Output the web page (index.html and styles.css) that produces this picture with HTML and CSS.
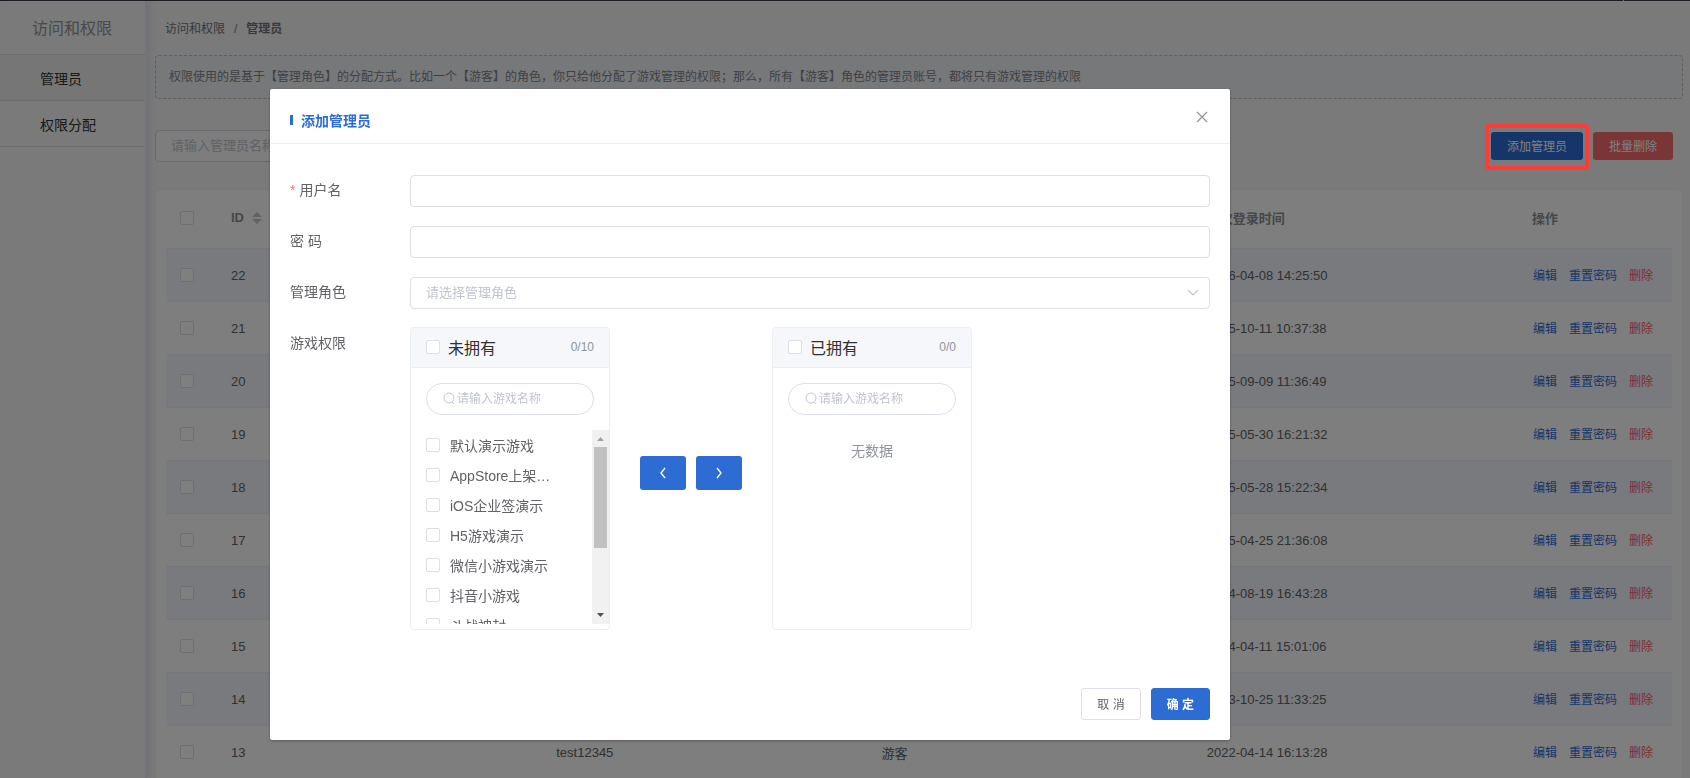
FILE: index.html
```
<!DOCTYPE html>
<html lang="zh-CN">
<head>
<meta charset="utf-8">
<title>管理员</title>
<link rel="stylesheet" href="styles.css">
</head>
<body>
<div class="topbar"></div>
<div class="layout">
  <aside class="sidebar">
    <h1 class="sidebar-title">访问和权限</h1>
    <nav class="menu">
      <a class="menu-item active" href="#">管理员</a>
      <a class="menu-item" href="#">权限分配</a>
    </nav>
  </aside>
  <main class="content">
    <nav class="breadcrumb"><a href="#">访问和权限</a><span class="sep">/</span><b>管理员</b></nav>
    <p class="notice">权限使用的是基于【管理角色】的分配方式。比如一个【游客】的角色，你只给他分配了游戏管理的权限；那么，所有【游客】角色的管理员账号，都将只有游戏管理的权限</p>
    <div class="toolbar">
      <input class="search" type="text" placeholder="请输入管理员名称" aria-label="管理员名称">
      <div class="toolbar-actions">
        <div class="marked"><button class="btn-small primary" type="button">添加管理员</button><span class="marker"></span></div>
        <button class="btn-small danger" type="button">批量删除</button>
      </div>
    </div>
    <section class="card">
      <table class="table">
        <colgroup><col class="col-check"><col><col><col><col><col class="col-ops"></colgroup>
        <thead>
          <tr><th><input class="check" type="checkbox" aria-label="全选"></th><th><span class="sortable">ID <svg class="sort" viewBox="0 0 10 14"><path d="M0 6L5 1L10 6ZM0 8L5 13L10 8Z" fill="#c0c4cc"/></svg></span></th><th></th><th></th><th>上次登录时间</th><th>操作</th></tr>
        </thead>
        <tbody id="rows"></tbody>
      </table>
    </section>
  </main>
</div>

<div class="overlay">
  <form class="dialog" role="dialog" aria-labelledby="dialog-title">
    <header class="dialog-header">
      <h2 class="dialog-title" id="dialog-title">添加管理员</h2>
      <button class="close" type="button" aria-label="关闭"><svg viewBox="0 0 12 12"><path d="M1 1L11 11M11 1L1 11" stroke="#909399" stroke-width="1.1" fill="none"/></svg></button>
    </header>
    <div class="dialog-body">
      <div class="field"><label class="label required" for="user">用户名</label><input class="control" id="user" type="text"></div>
      <div class="field"><label class="label" for="pass">密 码</label><input class="control" id="pass" type="password"></div>
      <div class="field"><label class="label" for="role">管理角色</label>
        <div class="select-wrap"><select class="control select" id="role"><option>请选择管理角色</option></select><svg class="arrow" viewBox="0 0 12 8"><path d="M1 1L6 6L11 1" stroke="#c0c4cc" stroke-width="1.2" fill="none"/></svg></div>
      </div>
      <div class="field"><span class="label">游戏权限</span>
        <div class="transfer">
          <section class="panel">
            <div class="panel-head"><label class="panel-name"><input class="check" type="checkbox">未拥有</label><span class="count">0/10</span></div>
            <div class="filter"><svg viewBox="0 0 14 14"><circle cx="7" cy="6" r="5"/><path d="M10 10L12 12"/></svg><input type="text" placeholder="请输入游戏名称" aria-label="请输入游戏名称"></div>
            <div class="scroll">
              <div class="list">
                <label class="item"><input class="check" type="checkbox"><span>默认演示游戏</span></label>
                <label class="item"><input class="check" type="checkbox"><span>AppStore上架…</span></label>
                <label class="item"><input class="check" type="checkbox"><span>iOS企业签演示</span></label>
                <label class="item"><input class="check" type="checkbox"><span>H5游戏演示</span></label>
                <label class="item"><input class="check" type="checkbox"><span>微信小游戏演示</span></label>
                <label class="item"><input class="check" type="checkbox"><span>抖音小游戏</span></label>
                <label class="item"><input class="check" type="checkbox"><span>斗战神封</span></label>
              </div>
              <div class="bar"><svg viewBox="0 0 17 17"><path d="M5 11L8.500 7L12 11Z" fill="#a3a3a3"/></svg><i class="thumb"></i><svg class="down" viewBox="0 0 17 17"><path d="M5 6L8.500 10L12 6Z" fill="#505050"/></svg></div>
            </div>
          </section>
          <div class="moves">
            <button class="move" type="button" aria-label="移到左侧"><svg viewBox="0 0 8 14"><path d="M6 2L2 7L6 12"/></svg></button>
            <button class="move" type="button" aria-label="移到右侧"><svg viewBox="0 0 8 14"><path d="M2 2L6 7L2 12"/></svg></button>
          </div>
          <section class="panel">
            <div class="panel-head"><label class="panel-name"><input class="check" type="checkbox">已拥有</label><span class="count">0/0</span></div>
            <div class="filter"><svg viewBox="0 0 14 14"><circle cx="7" cy="6" r="5"/><path d="M10 10L12 12"/></svg><input type="text" placeholder="请输入游戏名称" aria-label="请输入游戏名称"></div>
            <p class="empty">无数据</p>
          </section>
        </div>
      </div>
    </div>
    <footer class="dialog-footer">
      <button class="btn" type="button">取 消</button>
      <button class="btn confirm" type="button">确 定</button>
    </footer>
  </form>
</div>
<script src="app.js"></script>
</body>
</html>
```

FILE: styles.css
```
* { box-sizing: border-box; }

body {
  margin: 0;
  height: 100vh;
  overflow: hidden;
  display: flex;
  flex-direction: column;
  background: #f4f4f4;
  color: #606266;
  font-family: "Liberation Sans", "Noto Sans CJK SC", sans-serif;
  font-size: 14px;
}

h1, h2, p { margin: 0; font-weight: normal; }
a { color: inherit; text-decoration: none; }
button, input, select { font-family: inherit; outline: none; }
button { cursor: pointer; padding: 0; border: 0; }
svg { display: block; flex: none; }

.topbar { flex: none; display: flex; justify-content: flex-end; height: 1px; padding-right: 66px; background: #3a3444; }
.topbar::after { content: ""; width: 1px; background: #ddd; }
.layout { flex: 1; min-height: 0; display: flex; }

.sidebar {
  position: relative;
  flex: none;
  width: 147px;
  border-right: 2px solid #e4e8f2;
  box-shadow: 2px 0 8px rgba(60, 70, 130, 0.12);
  background: #f4f4f4;
}
.sidebar-title {
  height: 54px;
  padding: 2px 0 0 32px;
  border-bottom: 1px solid #dcdcdc;
  font-size: 16px;
  line-height: 52px;
  color: #909399;
}
.menu-item {
  display: block;
  height: 46px;
  padding: 1px 0 0 40px;
  border-bottom: 1px solid #dcdcdc;
  line-height: 46px;
  color: #303133;
}
.menu-item.active { background: #ececec; }

.content { flex: 1; min-width: 0; padding: 0 7px 0 8px; }
.breadcrumb {
  display: flex;
  padding: 1px 10px 0;
  height: 54px;
  line-height: 54px;
  font-size: 12px;
  color: #707278;
}
.breadcrumb .sep { padding: 0 9px; color: #808080; }

.notice {
  height: 44px;
  padding: 0 13px;
  border: 1px dashed #b8bcc4;
  border-radius: 4px;
  background: #eef0f4;
  font-size: 12px;
  line-height: 42px;
  color: #808288;
}

.toolbar {
  display: flex;
  align-items: center;
  justify-content: space-between;
  margin-top: 31px;
  padding-right: 10px;
}
.search {
  width: 200px;
  height: 32px;
  padding: 0 15px 2px;
  border: 1px solid #d4d6dc;
  border-radius: 4px;
  background: #fafafa;
  font-size: 13px;
}
::placeholder { color: #c0c4cc; opacity: 1; }
.toolbar-actions { display: flex; gap: 10px; }
.btn-small {
  height: 28px;
  padding: 0 16px 2px;
  border-radius: 3px;
  color: #fff;
  font-size: 12px;
  display: block;
}
.primary { background: #2d6dd3; }
.danger { background: #f56c6c; }
.marked { position: relative; }
.marker {
  position: absolute;
  inset: -8px -6px -10px;
  z-index: 20;
  border: 4px solid #ff3b38;
  border-radius: 4px;
  pointer-events: none;
}

.card {
  margin-top: 27px;
  padding: 0 10px;
  border: 1px solid #efefef;
  border-radius: 4px;
  background: #fcfcfc;
}
.table { width: 100%; table-layout: fixed; border-collapse: separate; border-spacing: 0; font-size: 13px; }
.col-check { width: 55px; }
.col-ops { width: 150px; }
.table th, .table td { padding: 0 10px; text-align: left; white-space: nowrap; border-bottom: 1px solid #ebeef5; }
.table th { height: 59px; padding-bottom: 3px; color: #8c8f95; }
.table td { height: 53px; }
.table th:first-child, .table td:first-child { padding-left: 14px; }
.table tbody tr:nth-child(odd) { background: #f3f5fa; }
.sortable { display: flex; align-items: center; gap: 8px; }
.sort { width: 10px; height: 14px; }
.ops { display: flex; gap: 12px; padding: 0 0 2px 1px; font-size: 12px; }
.ops a { color: #2d6dd3; }
.ops .remove { color: #f5606c; }

.check {
  appearance: none;
  display: block;
  flex: none;
  width: 14px;
  height: 14px;
  margin: 0;
  border: 1px solid #dcdfe6;
  border-radius: 2px;
  background: #fff;
}

.overlay {
  position: fixed;
  inset: 0;
  z-index: 10;
  display: flex;
  justify-content: center;
  align-items: flex-start;
  padding: 89px 190px 0 0;
  background: rgba(0, 0, 0, 0.5);
}
.dialog {
  width: 960px;
  border-radius: 2px;
  background: #fff;
  box-shadow: 0 1px 3px rgba(0, 0, 0, 0.3);
}
.dialog-header {
  display: flex;
  align-items: center;
  justify-content: space-between;
  height: 55px;
  padding: 0 20px;
  border-bottom: 1px solid #ebeef5;
}
.dialog-title { display: flex; align-items: center; gap: 8px; padding-top: 8px; font-size: 14px; font-weight: bold; color: #2d6dd3; }
.dialog-title::before { content: ""; width: 3px; height: 10px; background: #2d6dd3; }
.close { width: 16px; height: 18px; padding-top: 2px; background: none; display: grid; place-items: center; }
.close svg { width: 12px; height: 12px; }

.dialog-body { display: flex; flex-direction: column; gap: 19px; padding: 31px 20px 0; }
.field { display: flex; }
.label { flex: none; width: 120px; line-height: 30px; }
.required::before { content: "*"; margin-right: 4px; color: #f56c6c; }
.control {
  display: block;
  flex: 1;
  width: 100%;
  min-width: 0;
  height: 32px;
  padding: 0 15px;
  border: 1px solid #dcdfe6;
  border-radius: 4px;
  background: #fff;
  font-size: 13px;
}
.select-wrap { position: relative; flex: 1; }
.select { appearance: none; padding-bottom: 2px; color: #c0c4cc; }
.arrow { position: absolute; right: 11px; top: 12px; width: 12px; height: 8px; }

.transfer { display: flex; align-items: center; margin-top: -1px; }
.panel {
  width: 200px;
  height: 303px;
  border: 1px solid #ebeef5;
  border-radius: 4px;
  overflow: hidden;
}
.panel-head {
  display: flex;
  align-items: center;
  justify-content: space-between;
  height: 40px;
  padding: 0 15px 1px;
  border-bottom: 1px solid #ebeef5;
  background: #f5f7fa;
}
.panel-name { display: flex; align-items: center; gap: 8px; font-size: 16px; color: #303133; }
.count { font-size: 12px; color: #909399; }
.filter {
  display: flex;
  align-items: center;
  gap: 1px;
  height: 32px;
  margin: 15px;
  padding: 0 15px;
  border: 1px solid #dcdfe6;
  border-radius: 16px;
}
.filter svg { width: 14px; height: 14px; fill: none; stroke: #c0c4cc; }
.filter input { flex: 1; min-width: 0; padding: 0; border: 0; background: none; font-size: 12px; }
.scroll { display: flex; height: 194px; }
.list { flex: 1; min-width: 0; padding-left: 15px; overflow: hidden; }
.item { display: flex; align-items: center; gap: 10px; height: 30px; white-space: nowrap; }
.bar { display: flex; flex-direction: column; width: 17px; background: #f1f1f1; }
.bar svg { width: 17px; height: 17px; }
.thumb { height: 101px; margin: 0 2px; background: #c1c1c1; }
.bar .down { margin-top: auto; }
.empty { padding-top: 6px; line-height: 30px; text-align: center; color: #909399; }
.moves { display: flex; gap: 10px; padding: 0 30px 11px; }
.move { display: grid; place-items: center; width: 46px; height: 34px; border-radius: 3px; background: #2d6dd3; }
.move svg { width: 8px; height: 14px; fill: none; stroke: #fff; stroke-width: 1.3; }

.dialog-footer { display: flex; justify-content: flex-end; gap: 10px; padding: 58px 20px 20px; }
.btn {
  height: 32px;
  padding: 0 15px 2px;
  border: 1px solid #dcdfe6;
  border-radius: 3px;
  background: #fff;
  color: #606266;
  font-size: 12px;
}
.confirm { border-color: #2d6dd3; background: #2d6dd3; color: #fff; font-weight: bold; }
```

FILE: app.js
```
const admins = [
  [22, "", "", "2026-04-08 14:25:50"],
  [21, "", "", "2025-10-11 10:37:38"],
  [20, "", "", "2025-09-09 11:36:49"],
  [19, "", "", "2025-05-30 16:21:32"],
  [18, "", "", "2025-05-28 15:22:34"],
  [17, "", "", "2025-04-25 21:36:08"],
  [16, "", "", "2024-08-19 16:43:28"],
  [15, "", "", "2024-04-11 15:01:06"],
  [14, "", "", "2023-10-25 11:33:25"],
  [13, "test12345", "游客", "2022-04-14 16:13:28"]
];

document.getElementById("rows").innerHTML = admins.map(([id, name, role, time]) => `
  <tr>
    <td><input class="check" type="checkbox" aria-label="选择 ${id}"></td>
    <td>${id}</td><td>${name}</td><td>${role}</td><td>${time}</td>
    <td><div class="ops"><a href="#">编辑</a><a href="#">重置密码</a><a class="remove" href="#">删除</a></div></td>
  </tr>`).join("");
```
